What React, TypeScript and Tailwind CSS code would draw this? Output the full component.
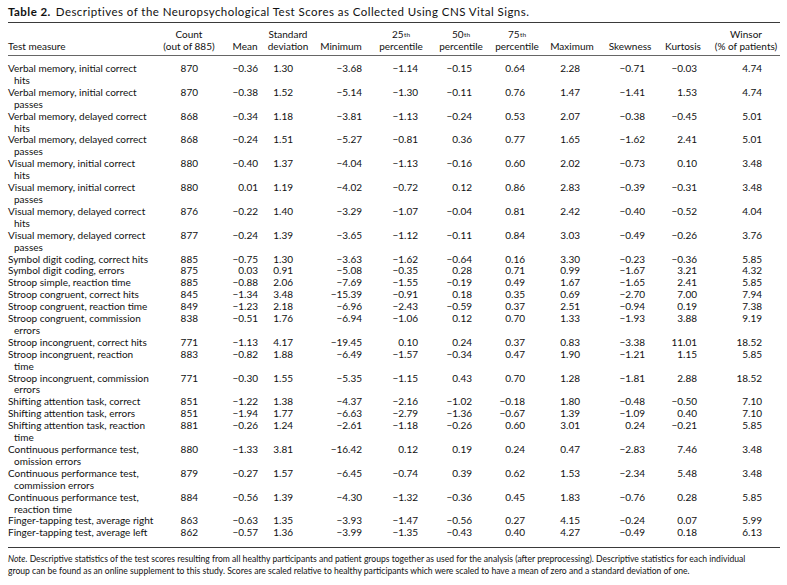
import React from 'react';

type Col = { head: React.ReactNode; cell: string; pr: string };

const th = <sup className="text-[6.5px] relative -top-[1px] ml-[0.5px]">th</sup>;

const cols: Col[] = [
  { head: <><span>Count</span><span>(out of 885)</span></>, cell: 'w-[56px]', pr: 'pr-[19px]' },
  { head: <span>Mean</span>, cell: 'ml-[6px] w-[44px]', pr: 'pr-[9px]' },
  { head: <><span>Standard</span><span>deviation</span></>, cell: 'w-[42px]', pr: 'pr-[16px]' },
  { head: <span>Minimum</span>, cell: 'ml-[7px] w-[50px]', pr: 'pr-[4px]' },
  { head: <><span>25{th}</span><span>percentile</span></>, cell: 'ml-[10px] w-[50px]', pr: 'pr-[8px]' },
  { head: <><span>50{th}</span><span>percentile</span></>, cell: 'ml-[10px] w-[50px]', pr: 'pr-[14px]' },
  { head: <><span>75{th}</span><span>percentile</span></>, cell: 'ml-[6px] w-[50px]', pr: 'pr-[17px]' },
  { head: <span>Maximum</span>, cell: 'ml-[5px] w-[50px]', pr: 'pr-[17px]' },
  { head: <span>Skewness</span>, cell: 'ml-[8px] w-[50px]', pr: 'pr-[10px]' },
  { head: <span>Kurtosis</span>, cell: 'ml-[3px] w-[50px]', pr: 'pr-[11px]' },
  { head: <><span>Winsor</span><span>(% of patients)</span></>, cell: 'ml-[6px] w-[64px]', pr: 'pr-[16px]' },
];

// [label line 1, label line 2 (or ''), ...values]
const rows: string[][] = [
  ['Verbal memory, initial correct', 'hits', '870', '−0.36', '1.30', '−3.68', '−1.14', '−0.15', '0.64', '2.28', '−0.71', '−0.03', '4.74'],
  ['Verbal memory, initial correct', 'passes', '870', '−0.38', '1.52', '−5.14', '−1.30', '−0.11', '0.76', '1.47', '−1.41', '1.53', '4.74'],
  ['Verbal memory, delayed correct', 'hits', '868', '−0.34', '1.18', '−3.81', '−1.13', '−0.24', '0.53', '2.07', '−0.38', '−0.45', '5.01'],
  ['Verbal memory, delayed correct', 'passes', '868', '−0.24', '1.51', '−5.27', '−0.81', '0.36', '0.77', '1.65', '−1.62', '2.41', '5.01'],
  ['Visual memory, initial correct', 'hits', '880', '−0.40', '1.37', '−4.04', '−1.13', '−0.16', '0.60', '2.02', '−0.73', '0.10', '3.48'],
  ['Visual memory, initial correct', 'passes', '880', '0.01', '1.19', '−4.02', '−0.72', '0.12', '0.86', '2.83', '−0.39', '−0.31', '3.48'],
  ['Visual memory, delayed correct', 'hits', '876', '−0.22', '1.40', '−3.29', '−1.07', '−0.04', '0.81', '2.42', '−0.40', '−0.52', '4.04'],
  ['Visual memory, delayed correct', 'passes', '877', '−0.24', '1.39', '−3.65', '−1.12', '−0.11', '0.84', '3.03', '−0.49', '−0.26', '3.76'],
  ['Symbol digit coding, correct hits', '', '885', '−0.75', '1.30', '−3.63', '−1.62', '−0.64', '0.16', '3.30', '−0.23', '−0.36', '5.85'],
  ['Symbol digit coding, errors', '', '875', '0.03', '0.91', '−5.08', '−0.35', '0.28', '0.71', '0.99', '−1.67', '3.21', '4.32'],
  ['Stroop simple, reaction time', '', '885', '−0.88', '2.06', '−7.69', '−1.55', '−0.19', '0.49', '1.67', '−1.65', '2.41', '5.85'],
  ['Stroop congruent, correct hits', '', '845', '−1.34', '3.48', '−15.39', '−0.91', '0.18', '0.35', '0.69', '−2.70', '7.00', '7.94'],
  ['Stroop congruent, reaction time', '', '849', '−1.23', '2.18', '−6.96', '−2.43', '−0.59', '0.37', '2.51', '−0.94', '0.19', '7.38'],
  ['Stroop congruent, commission', 'errors', '838', '−0.51', '1.76', '−6.94', '−1.06', '0.12', '0.70', '1.33', '−1.93', '3.88', '9.19'],
  ['Stroop incongruent, correct hits', '', '771', '−1.13', '4.17', '−19.45', '0.10', '0.24', '0.37', '0.83', '−3.38', '11.01', '18.52'],
  ['Stroop incongruent, reaction', 'time', '883', '−0.82', '1.88', '−6.49', '−1.57', '−0.34', '0.47', '1.90', '−1.21', '1.15', '5.85'],
  ['Stroop incongruent, commission', 'errors', '771', '−0.30', '1.55', '−5.35', '−1.15', '0.43', '0.70', '1.28', '−1.81', '2.88', '18.52'],
  ['Shifting attention task, correct', '', '851', '−1.22', '1.38', '−4.37', '−2.16', '−1.02', '−0.18', '1.80', '−0.48', '−0.50', '7.10'],
  ['Shifting attention task, errors', '', '851', '−1.94', '1.77', '−6.63', '−2.79', '−1.36', '−0.67', '1.39', '−1.09', '0.40', '7.10'],
  ['Shifting attention task, reaction', 'time', '881', '−0.26', '1.24', '−2.61', '−1.18', '−0.26', '0.60', '3.01', '0.24', '−0.21', '5.85'],
  ['Continuous performance test,', 'omission errors', '880', '−1.33', '3.81', '−16.42', '0.12', '0.19', '0.24', '0.47', '−2.83', '7.46', '3.48'],
  ['Continuous performance test,', 'commission errors', '879', '−0.27', '1.57', '−6.45', '−0.74', '0.39', '0.62', '1.53', '−2.34', '5.48', '3.48'],
  ['Continuous performance test,', 'reaction time', '884', '−0.56', '1.39', '−4.30', '−1.32', '−0.36', '0.45', '1.83', '−0.76', '0.28', '5.85'],
  ['Finger-tapping test, average right', '', '863', '−0.63', '1.35', '−3.93', '−1.47', '−0.56', '0.27', '4.15', '−0.24', '0.07', '5.99'],
  ['Finger-tapping test, average left', '', '862', '−0.57', '1.36', '−3.99', '−1.35', '−0.43', '0.40', '4.27', '−0.49', '0.18', '6.13'],
];

export default function App() {
  return (
    <div className="w-[787px] h-[585px] overflow-hidden bg-white px-[8px] pt-[5px] text-[#111] font-['Lato',sans-serif] text-[10px]">
      <div className="leading-[13px] text-[11.5px] tracking-[0.45px] whitespace-nowrap">
        <span className="font-bold">Table 2.</span>
        <span className="ml-[5px]">Descriptives of the Neuropsychological Test Scores as Collected Using CNS Vital Signs.</span>
      </div>

      <div className="w-[772px] mt-[4px] border-t border-[#3a3a3a]">
        {/* header */}
        <div className="flex items-end leading-[12px] pt-[5px] pb-[3px] border-b border-[#666]">
          <div className="w-[153px]">Test measure</div>
          {cols.map((c, i) => (
            <div key={i} className={`${c.cell} flex flex-col items-center whitespace-nowrap`}>
              {c.head}
            </div>
          ))}
        </div>

        {/* body */}
        <div className="pt-[7px] pb-[8px] leading-[11.9px] border-b border-[#3a3a3a]">
          {rows.map((r, i) => (
            <div key={i} className="flex items-start">
              <div className="w-[153px] whitespace-nowrap">
                <div>{r[0]}</div>
                {r[1] && <div className="pl-[6px]">{r[1]}</div>}
              </div>
              {cols.map((c, j) => (
                <div key={j} className={`${c.cell} ${c.pr} text-right whitespace-nowrap`}>
                  {r[j + 2]}
                </div>
              ))}
            </div>
          ))}
        </div>
      </div>

      <div className="pt-[5px] leading-[12px] text-[8.6px] whitespace-nowrap">
        <p>
          <span className="italic">Note.</span> Descriptive statistics of the test scores resulting from all healthy participants and patient groups together as used for the analysis (after preprocessing). Descriptive statistics for each individual
        </p>
        <p>
          group can be found as an online supplement to this study. Scores are scaled relative to healthy participants which were scaled to have a mean of zero and a standard deviation of one.
        </p>
      </div>
    </div>
  );
}
